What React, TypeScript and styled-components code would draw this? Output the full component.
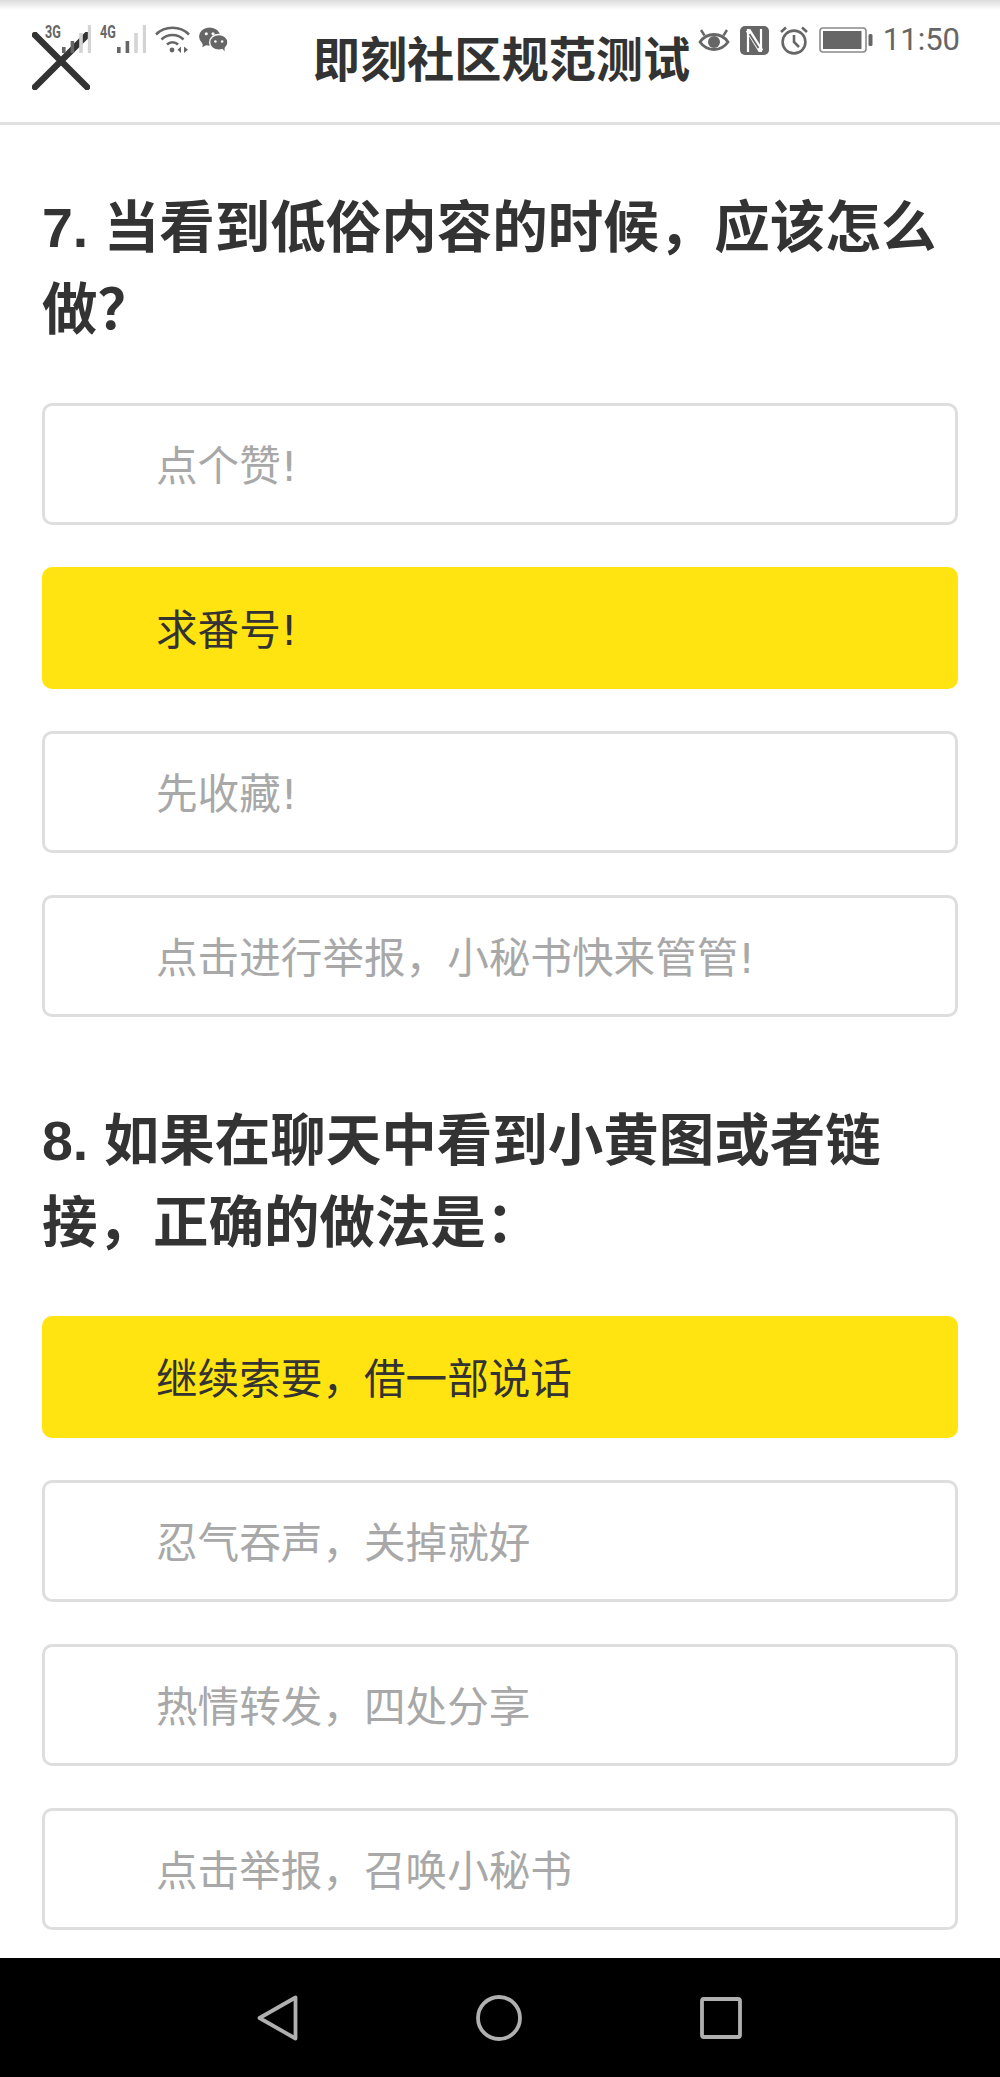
import styled, { createGlobalStyle } from "styled-components";

const questions = [
  {
    title: "7. 当看到低俗内容的时候，应该怎么做？",
    options: ["点个赞!", "求番号!", "先收藏!", "点击进行举报，小秘书快来管管!"],
    selected: 1,
  },
  {
    title: "8. 如果在聊天中看到小黄图或者链接，正确的做法是：",
    options: ["继续索要，借一部说话", "忍气吞声，关掉就好", "热情转发，四处分享", "点击举报，召唤小秘书"],
    selected: 0,
  },
];

const SignalBars = ({ active }: { active: number }) => (
  <svg width="30" height="28" viewBox="0 0 30 28">
    {[0, 1, 2, 3].map(i => {
      const h = [6, 12, 20, 28][i];
      return <rect key={i} x={1 + i * 8.6} y={28 - h} width="3.6" height={h} fill={i < active ? "#666" : "#d4d4d4"} />;
    })}
  </svg>
);

const WifiIcon = () => (
  <svg width="35" height="28" viewBox="0 0 35 28" fill="none" stroke="#666" strokeWidth="2.6">
    <path d="M1 9.5C10 0.5 25 0.5 34 9.5" />
    <path d="M6.5 14.5C12.5 8.5 22.5 8.5 28.5 14.5" />
    <path d="M12 19.5C15 16.5 20 16.5 23 19.5" />
    <circle cx="17" cy="25" r="2.4" fill="#666" stroke="none" />
    <path d="M26 21.5V28L22.5 24.8ZM29 21.5V28L33 24.8Z" fill="#666" stroke="none" />
  </svg>
);

const WechatIcon = () => (
  <svg width="29" height="25" viewBox="0 0 30 26">
    <ellipse cx="11" cy="10" rx="11" ry="9.6" fill="#666" />
    <path d="M4 15L3.5 21L9 18Z" fill="#666" />
    <ellipse cx="20.5" cy="16" rx="9.5" ry="8.2" fill="#666" stroke="#fff" strokeWidth="1.4" />
    <path d="M24 22L26.5 25.5L26.5 20Z" fill="#666" />
    <circle cx="7.5" cy="7" r="1.6" fill="#fff" />
    <circle cx="14.5" cy="7" r="1.6" fill="#fff" />
    <circle cx="17" cy="15" r="1.3" fill="#fff" />
    <circle cx="24" cy="15" r="1.3" fill="#fff" />
  </svg>
);

const EyeIcon = () => (
  <svg width="32" height="28" viewBox="0 0 32 28" fill="none" stroke="#666" strokeWidth="2.8">
    <path d="M2 16C9 6 23 6 30 16C23 26 9 26 2 16Z" />
    <circle cx="16" cy="16" r="6" fill="#666" stroke="none" />
    <path d="M3 4L6.5 9.5M29 4L25.5 9.5" strokeWidth="2.4" />
  </svg>
);

const NfcIcon = () => (
  <svg width="29" height="29" viewBox="0 0 29 29">
    <rect width="29" height="29" rx="5" fill="#666" />
    <path d="M8 3V26M21 3V26" stroke="#fff" strokeWidth="2.2" fill="none" />
    <path d="M8 4L21 25" stroke="#fff" strokeWidth="5" fill="none" />
    <path d="M9.5 8L18.5 22" stroke="#666" strokeWidth="1.8" fill="none" />
  </svg>
);

const AlarmIcon = () => (
  <svg width="30" height="29" viewBox="0 0 30 29" fill="none" stroke="#666" strokeWidth="2.6">
    <circle cx="15" cy="16" r="11.4" />
    <path d="M15 9V16L20 21" />
    <path d="M2 6L7 1.5M28 6L23 1.5" />
  </svg>
);

const BatteryIcon = () => (
  <svg width="54" height="26" viewBox="0 0 54 26">
    <rect x="1" y="1" width="46" height="24" rx="3" fill="none" stroke="#8a8a8a" strokeWidth="1.6" />
    <rect x="4" y="4" width="38.5" height="18" fill="#666" />
    <rect x="49.5" y="7" width="4" height="12" rx="1.5" fill="#666" />
  </svg>
);

const CloseIcon = () => (
  <svg width="58" height="58" viewBox="0 0 58 58" stroke="#333" strokeWidth="6.5" strokeLinecap="round">
    <path d="M3 3L55 55M55 3L3 55" />
  </svg>
);

export default function App() {
  return (
    <Page>
      <GlobalStyle />
      <TopShade />
      <StatusBar>
        <LeftStatus>
          <Network>
            <NetworkLabel>3G</NetworkLabel>
            <SignalBars active={2} />
          </Network>
          <Network>
            <NetworkLabel>4G</NetworkLabel>
            <SignalBars active={2} />
          </Network>
          <WifiIcon />
          <WechatIcon />
        </LeftStatus>
        <RightStatus>
          <EyeIcon />
          <NfcIcon />
          <AlarmIcon />
          <BatteryIcon />
          <Clock>11:50</Clock>
        </RightStatus>
      </StatusBar>
      <Header>
        <CloseButton>
          <CloseIcon />
        </CloseButton>
        <HeaderTitle>即刻社区规范测试</HeaderTitle>
      </Header>
      <Content>
        {questions.map(q => (
          <Question key={q.title}>
            <QuestionTitle>{q.title}</QuestionTitle>
            <Options>
              {q.options.map((opt, i) => (
                <Option key={opt} $selected={i === q.selected}>
                  {opt}
                </Option>
              ))}
            </Options>
          </Question>
        ))}
      </Content>
      <NavBar>
        <svg width="41" height="46" viewBox="0 0 41 46" fill="none" stroke="#b0b0b0" strokeWidth="3.8" strokeLinejoin="round">
          <path d="M38.5 2.5V43.5L2.5 23Z" />
        </svg>
        <svg width="46" height="46" viewBox="0 0 46 46" fill="none" stroke="#b0b0b0" strokeWidth="3.8">
          <circle cx="23" cy="23" r="21" />
        </svg>
        <svg width="42" height="42" viewBox="0 0 42 42" fill="none" stroke="#b0b0b0" strokeWidth="3.8" strokeLinejoin="round">
          <rect x="2" y="2" width="38" height="38" rx="2" />
        </svg>
      </NavBar>
    </Page>
  );
}

const GlobalStyle = createGlobalStyle`
  html, body {
    margin: 0;
    padding: 0;
    background: #fff;
  }

  * {
    box-sizing: border-box;
  }
`;

const Page = styled.div`
  position: relative;
  display: flex;
  flex-direction: column;
  width: 1000px;
  height: 2077px;
  overflow: hidden;
  background: #fff;
  color: #333;
  font-family: "Liberation Sans", "Noto Sans CJK SC", sans-serif;
`;

const TopShade = styled.div`
  position: absolute;
  top: 0;
  left: 0;
  right: 0;
  height: 10px;
  background: linear-gradient(#dcdcdc, #fff);
`;

const StatusBar = styled.div`
  position: absolute;
  z-index: 1;
  top: 25px;
  left: 45px;
  right: 40px;
  display: flex;
  justify-content: space-between;
  align-items: flex-start;
`;

const LeftStatus = styled.div`
  display: flex;
  align-items: center;
  gap: 9px;
`;

const RightStatus = styled.div`
  display: flex;
  align-items: center;
  gap: 10px;
`;

const Network = styled.div`
  display: flex;
`;

const NetworkLabel = styled.span`
  width: 16px;
  font-family: "Roboto", sans-serif;
  font-size: 18px;
  font-weight: 700;
  line-height: 14px;
  color: #666;
  transform: scaleX(0.7);
  transform-origin: left center;
`;

const Clock = styled.span`
  font-family: "Roboto", sans-serif;
  font-size: 31px;
  line-height: 30px;
  color: #666;
`;

const Header = styled.header`
  position: relative;
  display: flex;
  align-items: center;
  justify-content: center;
  flex: none;
  height: 125px;
  padding-bottom: 1px;
  border-bottom: 3px solid #e0e0e0;
`;

const CloseButton = styled.div`
  position: absolute;
  left: 32px;
  top: 32px;
  display: flex;
`;

const HeaderTitle = styled.h1`
  margin: 0 0 0 3px;
  font-size: 47.2px;
  font-weight: 700;
  line-height: 56px;
  color: #333;
`;

const Content = styled.main`
  flex: 1;
  min-height: 0;
  padding: 0 42px;
`;

const Question = styled.section`
  padding-top: 62px;
  padding-bottom: 21px;
`;

const QuestionTitle = styled.h2`
  margin: 0 0 52px;
  font-size: 55.5px;
  font-weight: 700;
  line-height: 82px;
  color: #333;
`;

const Options = styled.div`
  display: flex;
  flex-direction: column;
  gap: 42px;
`;

const Option = styled.div<{ $selected: boolean }>`
  display: flex;
  align-items: center;
  height: 122px;
  padding-left: 111px;
  padding-bottom: 2px;
  border-radius: 10px;
  border: 3px solid ${p => (p.$selected ? "#ffe411" : "#dedede")};
  background: ${p => (p.$selected ? "#ffe411" : "#fff")};
  color: ${p => (p.$selected ? "#333" : "#a8a8a8")};
  font-family: "DejaVu Sans", "Noto Sans CJK SC", sans-serif;
  font-size: 41.6px;
`;

const NavBar = styled.nav`
  display: flex;
  align-items: center;
  justify-content: flex-start;
  gap: 178px;
  flex: none;
  height: 119px;
  padding-left: 257px;
  background: #000;
`;
